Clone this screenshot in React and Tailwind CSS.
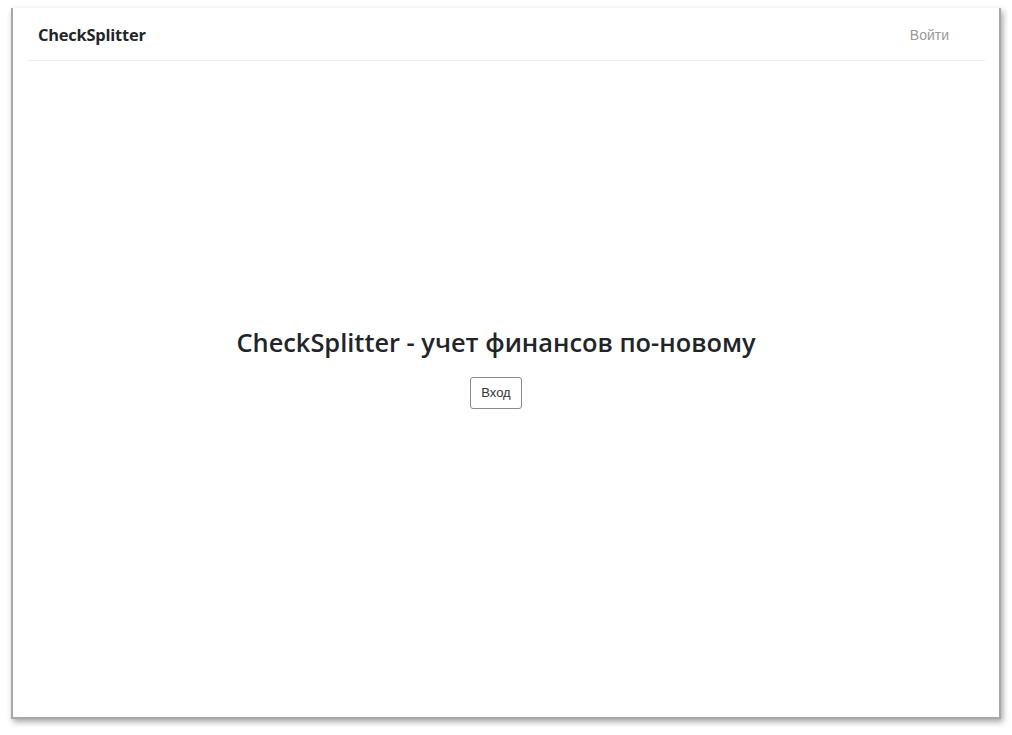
import React from 'react';

const Header = () => (
  <header className="mx-[14px] h-[53px] pt-[3px] flex items-center justify-between border-b border-[#eeeeee] pl-[11px] pr-[36px]">
    <span className="text-[16.4px] font-bold text-[#212529] tracking-[-0.2px]" style={{ fontFamily: '"Open Sans", sans-serif' }}>
      CheckSplitter
    </span>
    <a className="text-[14px] text-[#999999]" style={{ fontFamily: '"Liberation Sans", Arial, sans-serif' }}>
      Войти
    </a>
  </header>
);

const Hero = () => (
  <main className="flex flex-col items-center pt-[265px] pr-[20px]">
    <h1 className="text-[25.4px] font-semibold text-[#212529] leading-[32px]" style={{ fontFamily: '"Open Sans", sans-serif' }}>
      CheckSplitter - учет финансов по-новому
    </h1>
    <button
      className="mt-[19px] h-[32px] px-[10px] border border-[#8a8a8a] rounded-[3px] text-[13px] text-[#333333] bg-white"
      style={{ fontFamily: '"Liberation Sans", Arial, sans-serif' }}
    >
      Вход
    </button>
  </main>
);

const App = () => {
  return (
    <div className="w-[1012px] h-[735px] bg-white pt-[8px] pl-[11px]">
      <div className="w-[990px] h-[711px] bg-white border-l-2 border-r-2 border-b-2 border-[#a8a8a8] shadow-[2px_3px_6px_rgba(0,0,0,0.35)]">
        <Header />
        <Hero />
      </div>
    </div>
  );
};

export default App;
